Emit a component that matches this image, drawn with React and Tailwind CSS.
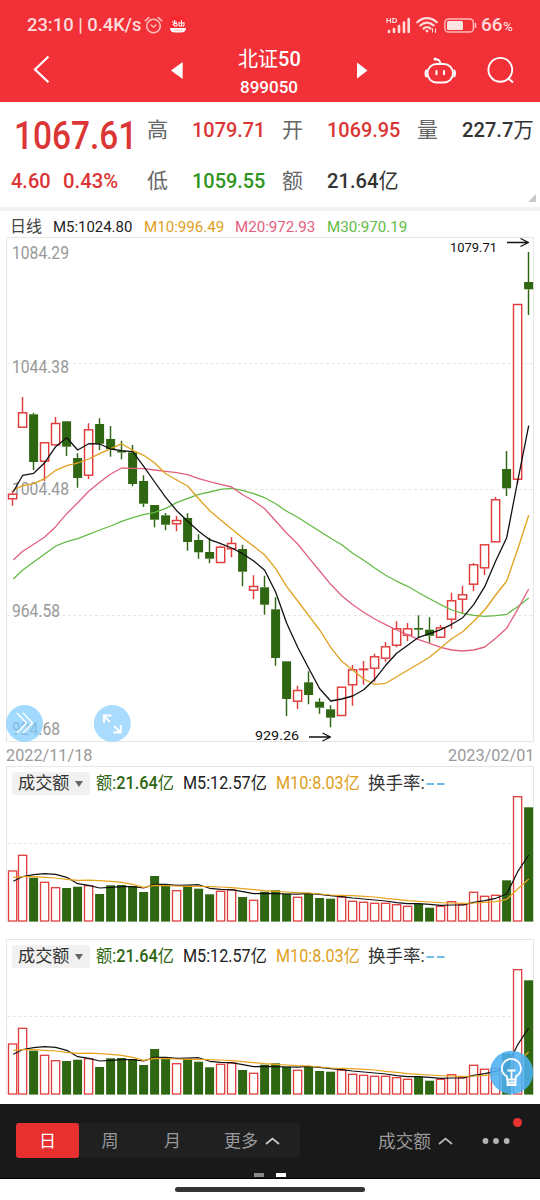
import React, { useLayoutEffect, useRef } from 'react';

// [red?, high, bodyTop, bodyBottom, low, volumeTop]
const DAYS = [
  [1, 490.7, 493.7, 499.3, 505.7, 871], [1, 397, 412.3, 427.7, 427.7, 855.3], [0, 412.7, 414.3, 462, 470, 877.7],
  [1, 442.3, 442.3, 461.7, 481, 882.3], [1, 417, 423, 445.3, 445.3, 887.7], [0, 421.3, 421.3, 446.7, 456, 888],
  [0, 453.3, 458, 478, 487.7, 886.7], [1, 423.3, 429.3, 475.7, 479, 885.7], [0, 418.3, 424, 443.7, 450, 894],
  [0, 426, 439, 449.3, 456.7, 885.3], [0, 440.7, 451, 452.5, 459.3, 885], [0, 445, 452.3, 484, 486.3, 886],
  [0, 475.3, 481, 503.7, 507, 892], [0, 505, 505, 519.7, 527.3, 876], [0, 513, 515.3, 524.7, 530.3, 886],
  [1, 516, 520, 524.3, 531.3, 890.7], [0, 513.3, 518, 542, 550.7, 885.5], [0, 534.3, 540, 552.3, 558.7, 888.7],
  [0, 537.7, 552, 558.7, 563.3, 894.3], [1, 545.7, 546.7, 563, 563, 891.3], [1, 537.3, 543, 549.3, 557.3, 890],
  [0, 544.7, 549, 571.7, 586.3, 897], [1, 575.3, 586, 590.7, 599, 900.3], [0, 575.7, 587.3, 604.7, 614.7, 891.7],
  [0, 597.3, 609.3, 658, 665.7, 890.3], [0, 661.3, 661.3, 699, 716, 893.7], [1, 685.7, 690, 701.7, 709, 897.3],
  [0, 671.3, 682.3, 695, 704.3, 893.7], [0, 698.3, 701.7, 707.7, 713.7, 898], [0, 705.3, 709.3, 717.7, 727.3, 898.7],
  [1, 686.7, 686.7, 716, 716, 897], [1, 665, 669.3, 685.3, 705.7, 901.3], [1, 661, 668.6, 669.4, 684.7, 902.3],
  [1, 653.7, 656.3, 668.7, 681.7, 903.3], [1, 642, 646.3, 658.7, 661.7, 903.3], [1, 621.3, 628.3, 645.7, 647.3, 904.7],
  [1, 623, 628.3, 635.7, 641, 906.3], [0, 615.3, 628, 629.7, 637.7, 904], [0, 617.3, 629.7, 635.7, 642.7, 907.7],
  [1, 625, 627.3, 637.7, 637.7, 906.3], [1, 592.7, 600.3, 619.7, 628.7, 901.7], [1, 585.7, 594.3, 599.7, 613.7, 904.7],
  [1, 563, 564.3, 584.7, 591.3, 892.3], [1, 544.3, 544.3, 568.3, 575, 896.3], [1, 497, 499.3, 542.3, 542.3, 895.3],
  [0, 451, 469, 488.3, 496, 880.3], [1, 304, 304, 479.7, 484, 796.7], [0, 252, 282, 289.3, 315, 807.3],
];

const MA5 = [491.7, 475.3, 473.3, 462.7, 446.7, 437.7, 450, 443.7, 444, 449, 450.7, 451.7, 466.3, 482, 497.3, 510.7, 521.3, 531.3, 539.7, 543.7, 548, 553.7, 561, 570.3, 592.3, 623.3, 647.3, 668.3, 688.7, 701, 699, 696, 689.7, 679.3, 665.3, 653.3, 645.3, 637.3, 633.7, 629.7, 624.3, 617.7, 604.7, 586.7, 561, 537.7, 481, 425.7];
const MA10 = [490, 485.7, 483.7, 478.7, 470.3, 465.7, 463, 459, 453.7, 448.7, 443.7, 450.3, 455.3, 463, 473.7, 480, 486, 498.7, 510.7, 520, 529, 538, 546.3, 555, 568.7, 586.7, 601, 615.7, 630, 647.3, 661.3, 670, 679, 684.3, 683.3, 676.7, 670.3, 663.7, 657, 648, 638.7, 631.7, 621.3, 610, 595, 581, 549.3, 515.3];
const MA20 = [560, 551.3, 544.3, 537, 526.7, 513.7, 502.7, 491.3, 482.3, 474, 468, 468.3, 468.7, 470, 471.3, 472.7, 474.7, 478.7, 481.7, 484.3, 487, 494.7, 501, 508.7, 521, 533.3, 544, 557.7, 571, 584.3, 595.7, 604.7, 612.3, 619, 624.7, 630, 634.7, 639.7, 643.3, 647.3, 650, 651, 650, 647, 638.3, 628.3, 609.3, 589];
const MA30 = [579, 570, 562, 554, 546, 541.7, 538.7, 534.3, 530, 526, 521.3, 517.7, 514.7, 512.3, 508.3, 502.7, 498.3, 494.3, 492, 489.3, 488.3, 490.3, 493.7, 497.7, 503.7, 511.3, 517.3, 524.3, 531.3, 538.3, 544.7, 553.3, 560.3, 568, 575.3, 581.3, 586.3, 592.7, 598.7, 604.7, 610, 613.3, 615.3, 616.3, 615.7, 614.3, 606.7, 598];
const VOL5 = [881.3, 876.5, 874.7, 873.7, 874.3, 877.3, 883.7, 885.3, 888, 887.3, 886.7, 886.7, 888, 884.3, 884.3, 885.3, 885, 884.7, 888.3, 889.3, 889.7, 891.7, 893.7, 893.3, 893.7, 894, 894.2, 893.3, 894.3, 895.7, 896.7, 898, 899, 900, 901, 902.7, 903.7, 903.7, 904.3, 905.3, 905, 905, 902.3, 900.7, 898.3, 894, 871.7, 855];
const VOL10 = [877.3, 876.7, 876.7, 877.3, 878, 879.3, 880.3, 880.2, 880.7, 881.3, 882.3, 884.3, 887.3, 885.3, 885.7, 886, 886.3, 886.3, 886.7, 887, 887.7, 888.7, 889.7, 890.7, 891.3, 892, 892.7, 893, 894, 895, 895.3, 895.7, 896.3, 897, 898.3, 899.3, 900.7, 901.3, 902, 902.7, 903, 903.3, 903, 902.3, 901.7, 899.3, 889, 879];

const RED = '#e03c3c';
const GREEN = '#2e6612';
const cx = (i) => (i === 0 ? 12.5 : 11.5 + 11 * i);
const line = (ys) => ys.map((y, i) => `${cx(i) + (i === 0 ? 0.8 : 0.2)},${y}`).join(' ');

// Text squeezed or stretched horizontally to an exact width.
function Fit({ w, className = '', children }) {
  const ref = useRef(null);
  useLayoutEffect(() => {
    const el = ref.current;
    el.style.transform = `scaleX(${w / el.offsetWidth})`;
  }, [w]);
  return (
    <span className={`block shrink-0 ${className}`} style={{ width: w }}>
      <span ref={ref} className="inline-block origin-left whitespace-nowrap">{children}</span>
    </span>
  );
}

function StatusBar() {
  return (
    <div className="flex h-[46px] items-center pt-1 pr-[27px] pl-[27px] text-[#ffdcdc]">
      <Fit w={114} className="text-[19px] font-medium leading-6">23:10 | 0.4K/s</Fit>
      <svg className="ml-[3px]" width="19" height="19" viewBox="0 0 19 19" fill="none" stroke="#ffc0c2" strokeWidth="1.5" strokeLinecap="round">
        <circle cx="9.5" cy="10" r="6.8" /><path d="M1.2 4.8 4.8 1.6M17.8 4.8 14.2 1.6M7 9l2.5 2L12 9" />
      </svg>
      <svg className="ml-[6px]" width="18" height="18" viewBox="0 0 18 18">
        <rect x="1" y="0.5" width="16" height="16" rx="3" fill="#f9282e" />
        <path d="M1 12h16c0 3-2 4.500-5 4.500H6c-3 0-5-1.500-5-4.500z" fill="#fff" />
        <path d="M3 6h5M5.500 4v3L3.500 9M5 7.500h3v2.500H5zM10 6v4M12.500 4v6M15 6v4M10 10h5M10 7h5" fill="none" stroke="#fff" strokeWidth="1" />
        <path d="M5 14.200h8" stroke="#e99" strokeWidth="1" strokeDasharray="1.500 .7" />
      </svg>
      <svg className="ml-auto" width="25" height="17" viewBox="0 0 25 17" fill="none" stroke="#ffdcdc">
        <path d="M1 1v5M4.500 1v5M1 3.500h3.500M6.800 1.500h1.500c3 0 3 4 0 4H6.800z" strokeWidth="1.200" />
        <path d="M3 14v1M8 12v3M13 9v6M18 5.500V15M22.700 2v13" strokeWidth="2.600" strokeLinecap="round" />
      </svg>
      <svg className="ml-[5px]" width="22" height="18" viewBox="0 0 22 18" fill="none" stroke="#ffdcdc" strokeWidth="2.200" strokeLinecap="round">
        <path d="M1.300 6.300C7 .8 15 .8 20.700 6.300M4.300 9.500c4-3.800 9.400-3.800 13.400 0M7.600 12.600c2-2 4.800-2 6.800 0" />
        <circle cx="11" cy="15" r="1.400" fill="#ffdcdc" stroke="none" />
        <path d="M16.500 12.500v3.500M19.500 13v3.500" strokeWidth="1.100" />
      </svg>
      <svg className="ml-[6px]" width="33" height="15" viewBox="0 0 33 15">
        <rect x="0.9" y="0.9" width="28.500" height="13.200" rx="3.600" fill="none" stroke="#ffb9bb" strokeWidth="1.500" />
        <rect x="3" y="3" width="16" height="9" rx="1.500" fill="#ffe4e4" />
        <path d="M31.500 5.500v4" stroke="#ffb9bb" strokeWidth="1.600" strokeLinecap="round" />
      </svg>
      <Fit w={22} className="ml-[4px] text-[19px] font-medium leading-6">66</Fit>
      <Fit w={10} className="pt-[3px] text-[12px] font-medium leading-5">%</Fit>
    </div>
  );
}

function NavBar() {
  return (
    <div className="flex h-[56px] items-start text-white">
      <svg className="mt-[9px] ml-[33px]" width="17" height="29" viewBox="0 0 17 29" fill="none" stroke="#fff" strokeWidth="2.200"><path d="M15.500 1.500 2 14.500l13.500 12.800" /></svg>
      <svg className="mt-[16px] ml-[121px]" width="12" height="17" viewBox="0 0 12 17"><path d="M0 8.500 11.700 0v17z" fill="#fff" /></svg>
      <div className="ml-[54px] flex w-[64px] flex-col items-center">
        <Fit w={63} className="text-[21px] leading-[26px]">北证<span className="font-medium">50</span></Fit>
        <Fit w={58} className="mt-[4px] text-[17px] font-medium leading-[22px]">899050</Fit>
      </div>
      <svg className="mt-[16px] ml-[56px]" width="11" height="17" viewBox="0 0 11 17"><path d="M10.500 8.500 0 .5v16z" fill="#fff" /></svg>
      <svg className="mt-[10px] ml-[56px]" width="32" height="29" viewBox="0 0 32 29" fill="none" stroke="#fff" strokeWidth="1.900" strokeLinecap="round">
        <rect x="3.500" y="8" width="25.500" height="18.500" rx="9.200" />
        <path d="M2.200 14.500c-.8 2-.8 4 0 5.800M30.300 14.500c.8 2 .8 4 0 5.800M16.400 8c0-3.200-2-4.800-5-4.800M12.500 15v3.300M20 15v3.300" strokeWidth="2.100" />
        <circle cx="11" cy="3" r="1.500" fill="#fff" stroke="none" />
      </svg>
      <svg className="mt-[10px] ml-[31px]" width="28" height="28" viewBox="0 0 28 28" fill="none" stroke="#fff" strokeWidth="1.900"><circle cx="13.300" cy="13.800" r="11.900" /><path d="m21 22 5 4.500" /></svg>
    </div>
  );
}

function Quote() {
  return (
    <section className="relative flex h-[105px] bg-white">
      <div className="flex w-[147px] flex-col pl-[11px] text-[#dc3535]">
        <Fit w={123} className="mt-[12px] ml-[3px] text-[38px] font-medium leading-[44px]">1067.61</Fit>
        <div className="mt-[10px] flex gap-[12px] text-[21px] font-medium leading-[26px]">
          <Fit w={40}>4.60</Fit><Fit w={55}>0.43%</Fit>
        </div>
      </div>
      <div className="grid grid-cols-[45px_90px_45px_90px_45px_72px] grid-rows-[51px_51px] content-start pt-[15px] text-[21px] font-medium leading-[26px] text-[#333]">
        <span className="font-normal text-[#666]">高</span><Fit w={73} className="text-[#dc3535]">1079.71</Fit>
        <span className="font-normal text-[#666]">开</span><Fit w={73} className="text-[#dc3535]">1069.95</Fit>
        <span className="font-normal text-[#666]">量</span><Fit w={72}>227.7<span className="font-normal">万</span></Fit>
        <span className="font-normal text-[#666]">低</span><Fit w={73} className="text-[#2f9520]">1059.55</Fit>
        <span className="font-normal text-[#666]">额</span><Fit w={72}>21.64<span className="font-normal">亿</span></Fit>
      </div>
      <svg className="absolute right-[4px] bottom-[5px]" width="8" height="8" viewBox="0 0 8 8"><path d="M8 0v8H0z" fill="#c9c9c9" /></svg>
    </section>
  );
}

function MainChart() {
  return (
    <div className="relative h-[505px]">
      <svg className="block overflow-visible" width="540" height="505" viewBox="0 237 540 505">
        <g fill="none" stroke="#e6e6e6"><path d="M6.500 237.500h527v504h-527z" /><path d="M7 363.500h526M7 489.500h526M7 615.500h526" strokeDasharray="3 2.500" /></g>
        <g fill="#999" fontSize="17.500" fontFamily="Roboto">
          <text x="12" y="258.500" textLength="57" lengthAdjust="spacingAndGlyphs">1084.29</text>
          <text x="12" y="372.500" textLength="57" lengthAdjust="spacingAndGlyphs">1044.38</text>
          <text x="12" y="494.500" textLength="57" lengthAdjust="spacingAndGlyphs">1004.48</text>
          <text x="12" y="616.500" textLength="48" lengthAdjust="spacingAndGlyphs">964.58</text>
          <text x="12" y="735" textLength="48" lengthAdjust="spacingAndGlyphs">924.68</text>
        </g>
        {DAYS.map(([red, hi, top, bot, low], i) => (
          <g key={i} stroke={red ? RED : GREEN} strokeWidth="1.450">
            <path d={`M${cx(i)} ${hi}V${top}M${cx(i)} ${bot}V${low}`} />
            {red
              ? <rect x={cx(i) - 4} y={top + 0.5} width="8.200" height={Math.max(0.5, bot - top - 1)} fill="#fff" />
              : <rect x={cx(i) - 4.400} y={top} width="9" height={bot - top} fill={GREEN} stroke="none" />}
          </g>
        ))}
        <g fill="none" strokeWidth="1.300" strokeLinejoin="round">
          <polyline points={line(MA30)} stroke="#63bb45" />
          <polyline points={line(MA20)} stroke="#e2607e" />
          <polyline points={line(MA10)} stroke="#e0a01e" />
          <polyline points={line(MA5)} stroke="#111" />
          <path d="M507 242.500h21M520.500 238.500l8 4-8 4M309 737h21M322.500 733l8 4-8 4" stroke="#111" />
        </g>
        <g fill="#111" fontSize="13.500" fontFamily="Roboto">
          <text x="450" y="251.500" textLength="47" lengthAdjust="spacingAndGlyphs">1079.71</text>
          <text x="255" y="740" textLength="44" lengthAdjust="spacingAndGlyphs">929.26</text>
        </g>
        <g fill="none" stroke="#fff" strokeWidth="1.500">
          <circle cx="24.500" cy="723.500" r="18.500" fill="#7bcaff" fillOpacity=".7" stroke="none" />
          <path d="m17 713 9.500 10L17 733M23 713l9.500 10L23 733" />
          <circle cx="112.300" cy="723.500" r="18.500" fill="#a8dbfe" stroke="none" />
          <path d="m104 716 6 6M104 723v-7.500h7.500M114 726l6.500 6.500M120.800 725v7.500h-7.500" strokeWidth="1.900" />
        </g>
      </svg>
    </div>
  );
}

function VolumePanel() {
  return (
    <section className="relative h-[156px]">
      <svg className="block" width="540" height="156" viewBox="0 766 540 156">
        <path d="M6.500 922V766.500h527V922" fill="none" stroke="#e6e6e6" />
        <path d="M7 843.500h526" stroke="#e6e6e6" strokeDasharray="3 2.500" />
        {DAYS.map(([red, , , , , y], i) => red
          ? <rect key={i} x={cx(i) - 4} y={y} width="8.200" height={921 - y} fill="#fff" stroke={RED} strokeWidth="1.300" />
          : <rect key={i} x={cx(i) - 4.400} y={y} width="9" height={921.600 - y} fill={GREEN} />)}
        <g fill="none" strokeWidth="1.200" strokeLinejoin="round">
          <polyline points={line(VOL5)} stroke="#111" />
          <polyline points={line(VOL10)} stroke="#e8a41e" />
        </g>
      </svg>
      <div className="absolute top-[6px] left-[12px] flex h-[23px] items-center text-[17.500px] leading-[23px]">
        <div className="flex h-[23px] w-[78px] items-center rounded-[3px] bg-[#f1f1f1] pl-[6px] text-[#333]">
          <Fit w={52}>成交额</Fit>
          <svg className="ml-[5px]" width="8" height="6" viewBox="0 0 8 6"><path d="M0 0h8L4 6z" fill="#666" /></svg>
        </div>
        <Fit w={78} className="ml-[6px] text-[#2e6612]">额:<span className="font-medium">21.64</span>亿</Fit>
        <Fit w={84} className="ml-[9px] text-[#222]">M5:12.57亿</Fit>
        <Fit w={84} className="ml-[9px] text-[#e0a01e]">M10:8.03亿</Fit>
        <Fit w={57} className="ml-[8px] text-[#333]">换手率:</Fit>
        <svg className="ml-[1px]" width="19" height="4" viewBox="0 0 19 4"><path d="M.5 2h7.500M11 2h7.500" stroke="#3fa9e0" strokeWidth="1.400" /></svg>
      </div>
    </section>
  );
}

const Caret = () => (
  <svg width="15" height="8" viewBox="0 0 15 8" fill="none" stroke="currentColor" strokeWidth="1.700"><path d="m1 7 6.500-5.500L14 7" /></svg>
);

function BottomBar() {
  return (
    <div className="relative flex h-[75px] items-start border-b border-black bg-[#191919] pt-[19px] pl-[16px] text-[17px] leading-[37px] text-[#999]">
      <div className="flex h-[35px] w-[284px] rounded-[3px] bg-[#202020]">
        <span className="w-[63px] rounded-[3px] bg-[#e93030] text-center text-white">日</span>
        <span className="w-[62px] text-center">周</span>
        <span className="w-[63px] text-center">月</span>
        <span className="ml-[20px]">更多</span>
        <span className="mt-[14px] ml-[7px] leading-none text-[#ccc]"><Caret /></span>
      </div>
      <Fit w={53} className="ml-[78px] text-[18px]">成交额</Fit>
      <span className="mt-[14px] ml-[7px] leading-none text-[#bbb]"><Caret /></span>
      <svg className="mt-[13px] ml-[29px]" width="28" height="9" viewBox="0 0 28 9" fill="#b5b5b5"><circle cx="3.500" cy="5" r="2.900" /><circle cx="14" cy="5" r="2.900" /><circle cx="24.700" cy="5" r="2.900" /></svg>
      <span className="absolute top-[14px] left-[513px] size-[9px] rounded-full bg-[#ea3131]" />
      <div className="absolute bottom-[1px] left-[254px] flex gap-[12px]"><span className="h-1 w-[10px] bg-[#888]" /><span className="h-1 w-[10px] bg-white" /></div>
    </div>
  );
}

export default function App() {
  return (
    <main className="flex h-[1200px] w-[540px] flex-col overflow-hidden bg-white font-[Roboto,'Noto_Sans_CJK_SC',sans-serif]">
      <header className="h-[102px] bg-[#f23038]"><StatusBar /><NavBar /></header>
      <Quote />
      <div className="-mt-px h-[5px] bg-[#f3f3f3]" />
      <div className="flex h-[26px] items-center pt-[5px] pl-[10px] text-[15.500px] leading-5">
        <Fit w={32} className="text-[#444]">日线</Fit>
        <Fit w={79} className="ml-[11px] text-[#222]">M5:1024.80</Fit>
        <Fit w={80} className="ml-[12px] text-[#e0a01e]">M10:996.49</Fit>
        <Fit w={80} className="ml-[11px] text-[#e2607e]">M20:972.93</Fit>
        <Fit w={80} className="ml-[12px] text-[#63bb45]">M30:970.19</Fit>
      </div>
      <MainChart />
      <div className="flex h-[24px] items-center justify-between pt-[2px] pr-[6px] pl-[6px] text-[17px] leading-5 text-[#999]">
        <Fit w={86}>2022/11/18</Fit><Fit w={86}>2023/02/01</Fit>
      </div>
      <VolumePanel />
      <div className="relative mt-[17px] h-[165px]">
        <VolumePanel />
        <svg className="absolute top-[111px] left-[489px]" width="45" height="45" viewBox="0 0 45 45" fill="none" stroke="#fff" strokeWidth="1.800">
          <circle cx="22.500" cy="22.500" r="21.700" fill="#4cb1f4" fillOpacity=".87" stroke="none" />
          <path d="M18 29.500v-3c-3-1.700-5.200-4.300-5.200-8a9.600 9.600 0 0 1 19.200 0c0 3.700-2.200 6.300-5.200 8v3zM18.500 30v5h8v-5M18.500 32.500h8M18.500 20.500h8M22.500 20.500v8" />
        </svg>
      </div>
      <BottomBar />
      <div className="flex flex-1 justify-center"><span className="mt-[8px] h-[5px] w-[190px] rounded-full bg-[#333]" /></div>
    </main>
  );
}
